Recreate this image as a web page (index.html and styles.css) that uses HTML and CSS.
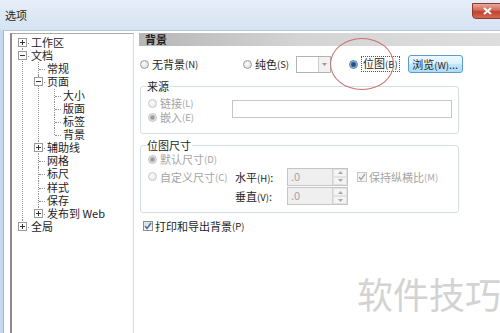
FILE: index.html
```html
<!DOCTYPE html>
<html lang="zh-CN">
<head>
    <meta charset="UTF-8">
    <title>选项</title>
    <link rel="stylesheet" href="styles.css">
</head>
<body>
<div class="window">
    <div class="titlebar">
        <span class="title">选项</span>
        <span class="close">
            <svg width="9" height="8" viewBox="0 0 9 8"><path d="M1 1l7 6M8 1l-7 6" stroke="#fff" stroke-width="2"/></svg>
        </span>
    </div>

    <div class="client">
        <!-- category tree -->
        <div class="tree">
            <ul>
                <li><svg class="exp" width="9" height="9"><rect x="0.5" y="0.5" width="8" height="8" fill="#fff" stroke="#9a9a9a"/><path d="M2 4.5h5M4.5 2v5" stroke="#333"/></svg><span class="label">工作区</span></li>
                <li><svg class="exp" width="9" height="9"><rect x="0.5" y="0.5" width="8" height="8" fill="#fff" stroke="#9a9a9a"/><path d="M2 4.5h5" stroke="#333"/></svg><span class="label">文档</span>
                    <ul>
                        <li><span class="label">常规</span></li>
                        <li><svg class="exp" width="9" height="9"><rect x="0.5" y="0.5" width="8" height="8" fill="#fff" stroke="#9a9a9a"/><path d="M2 4.5h5" stroke="#333"/></svg><span class="label">页面</span>
                            <ul>
                                <li><span class="label">大小</span></li>
                                <li><span class="label">版面</span></li>
                                <li><span class="label">标签</span></li>
                                <li><span class="label">背景</span></li>
                            </ul>
                        </li>
                        <li><svg class="exp" width="9" height="9"><rect x="0.5" y="0.5" width="8" height="8" fill="#fff" stroke="#9a9a9a"/><path d="M2 4.5h5M4.5 2v5" stroke="#333"/></svg><span class="label">辅助线</span></li>
                        <li><span class="label">网格</span></li>
                        <li><span class="label">标尺</span></li>
                        <li><span class="label">样式</span></li>
                        <li><span class="label">保存</span></li>
                        <li><svg class="exp" width="9" height="9"><rect x="0.5" y="0.5" width="8" height="8" fill="#fff" stroke="#9a9a9a"/><path d="M2 4.5h5M4.5 2v5" stroke="#333"/></svg><span class="label">发布到 Web</span></li>
                    </ul>
                </li>
                <li><svg class="exp" width="9" height="9"><rect x="0.5" y="0.5" width="8" height="8" fill="#fff" stroke="#9a9a9a"/><path d="M2 4.5h5M4.5 2v5" stroke="#333"/></svg><span class="label">全局</span></li>
            </ul>
        </div>

        <!-- background page -->
        <div class="panel">
            <div class="panel-head">背景</div>

            <div class="bg-row">
                <span class="opt opt-none"><span class="radio"></span>无背景<span class="key">(N)</span></span>
                <span class="opt opt-solid"><span class="radio"></span>纯色<span class="key">(S)</span></span>
                <span class="swatch">
                    <span class="swatch-color"></span>
                    <span class="swatch-drop"><svg width="5" height="3"><path d="M0 0h5L2.5 3z" fill="#999"/></svg></span>
                </span>
                <span class="opt opt-bitmap"><span class="radio radio-on"></span><span class="focus">位图<span class="key">(B)</span></span></span>
                <span class="btn">浏览<span class="key">(W)</span>...</span>
            </div>

            <fieldset class="group">
                <legend>来源</legend>
                <div class="source-body">
                    <div class="source-radios">
                        <div class="row disabled"><span class="radio radio-off"></span>链接<span class="key">(L)</span></div>
                        <div class="row disabled"><span class="radio radio-grey"></span>嵌入<span class="key">(E)</span></div>
                    </div>
                    <div class="text-input"></div>
                </div>
            </fieldset>

            <fieldset class="group group-size">
                <legend>位图尺寸</legend>
                <div class="size-grid">
                    <div class="row disabled"><span class="radio radio-grey"></span>默认尺寸<span class="key">(D)</span></div>
                    <div class="row disabled row-custom"><span class="radio radio-off"></span>自定义尺寸<span class="key">(C)</span></div>
                    <div class="field-label row-h">水平<span class="key">(H)</span>:</div>
                    <div class="spin row-h">
                        <span class="spin-val">.0</span>
                        <span class="spin-btns">
                            <span><svg width="5" height="3"><path d="M0 3h5L2.5 0z" fill="#aaa"/></svg></span>
                            <span><svg width="5" height="3"><path d="M0 0h5L2.5 3z" fill="#aaa"/></svg></span>
                        </span>
                    </div>
                    <div class="row disabled row-h keep">
                        <span class="check check-off"><svg width="8" height="8"><path d="M1 4l2 2.5L7 1" fill="none" stroke="#a8a8a8" stroke-width="1.4"/></svg></span>保持纵横比<span class="key">(M)</span>
                    </div>
                    <div class="field-label row-v">垂直<span class="key">(V)</span>:</div>
                    <div class="spin row-v">
                        <span class="spin-val">.0</span>
                        <span class="spin-btns">
                            <span><svg width="5" height="3"><path d="M0 3h5L2.5 0z" fill="#aaa"/></svg></span>
                            <span><svg width="5" height="3"><path d="M0 0h5L2.5 3z" fill="#aaa"/></svg></span>
                        </span>
                    </div>
                </div>
            </fieldset>

            <div class="check-row">
                <span class="check"><svg width="8" height="8"><path d="M1 4l2 2.5L7 1" fill="none" stroke="#3d6fa5" stroke-width="1.4"/></svg></span>打印和导出背景<span class="key">(P)</span>
            </div>

            <div class="callout"></div>
        </div>
    </div>

    <div class="watermark">软件技巧</div>
</div>
</body>
</html>
```

FILE: styles.css
```css
body {
    margin: 0;
    font-family: "Noto Sans CJK SC", "Noto Sans", sans-serif;
    font-size: 11px;
    color: #1e1e1e;
}
.window {
    position: relative;
    width: 500px;
    height: 333px;
    overflow: hidden;
    background: #c5d8ee;
}
.titlebar {
    display: flex;
    align-items: center;
    height: 30px;
    padding-left: 5px;
    background: linear-gradient(#e6eef8, #d5e3f3);
}
.close {
    display: flex;
    align-items: center;
    justify-content: center;
    align-self: flex-start;
    margin: 3px -3px 0 auto;
    width: 31px;
    height: 16px;
    box-sizing: border-box;
    border: 1px solid #8c3a30;
    border-radius: 0 0 0 4px;
    background: linear-gradient(#e9a99c, #d0685a 45%, #c04030 55%, #d56a52);
}
.client {
    display: flex;
    height: 303px;
    box-sizing: border-box;
    margin-left: 3px;
    padding: 2px 0 0 6px;
    border-left: 1px solid #a4b4c5;
    border-top: 1px solid #b8c7d7;
    background: #fff;
}

/* tree */
.tree {
    flex: none;
    width: 124px;
    height: 320px;
    box-sizing: border-box;
    border-left: 2px solid #8a8a8a;
    border-top: 1px solid #a9a9a9;
    border-right: 1px solid #dcdcdc;
}
.tree ul {
    list-style: none;
    margin: 0;
    padding: 0;
}
.tree > ul {
    margin-left: 10px;
    padding-top: 2px;
}
.tree li {
    position: relative;
    padding-left: 9px;
    white-space: nowrap;
}
.label {
    display: block;
    height: 13.15px;
    line-height: 13.15px;
}
.tree li::before {
    content: "";
    position: absolute;
    left: 0;
    top: 0;
    bottom: 0;
    border-left: 1px dotted #8e8e8e;
}
.tree > ul > li:first-child::before {
    top: 7px;
}
.tree li:last-child::before {
    bottom: auto;
    height: 7px;
}
.tree li::after {
    content: "";
    position: absolute;
    left: 1px;
    top: 7px;
    width: 6px;
    border-top: 1px dotted #8e8e8e;
}
.tree li ul {
    margin-left: 7px;
}
.exp {
    position: absolute;
    left: -4px;
    top: 2px;
    z-index: 1;
}

/* right panel */
.panel {
    position: relative;
    flex: 1;
    margin-left: 5px;
}
.panel-head {
    height: 13px;
    line-height: 13px;
    padding-left: 6px;
    font-weight: bold;
    background: linear-gradient(to right, #b6b6b6, #d4d4d4 45%, #dedede);
}
.key {
    font-size: 9.5px;
}
.bg-row {
    display: flex;
    align-items: center;
    height: 18px;
    margin-top: 9px;
}
.opt {
    display: flex;
    align-items: center;
    white-space: nowrap;
}
.opt-none {
    width: 103px;
    margin-left: 1px;
}
.opt-solid {
    width: 53px;
}
.opt-bitmap {
    margin-left: 18px;
}
.focus {
    display: inline-block;
    border: 1px dotted #555;
    padding: 0 1px;
    line-height: 13px;
    white-space: nowrap;
}
.radio {
    flex: none;
    width: 9px;
    height: 9px;
    box-sizing: border-box;
    margin-right: 3px;
    border: 1px solid #9c9c9c;
    border-radius: 50%;
    background: radial-gradient(circle at 40% 40%, #fdfdfd, #d4d4d4);
}
.radio-on {
    border-color: #5a7ea3;
    background: radial-gradient(circle, #1f4f7c 0 1.6px, #4b8ac0 2.6px, #c9ddef 3.6px);
}
.radio-off {
    border-color: #c8c8c8;
    background: radial-gradient(circle at 40% 40%, #fafafa, #e6e6e6);
}
.radio-grey {
    border-color: #c2c2c2;
    background: radial-gradient(circle, #9a9a9a 0 1.6px, #c8c8c8 2.4px, #eeeeee 3.4px);
}
.swatch {
    display: flex;
    height: 17px;
    box-sizing: border-box;
    border: 1px solid #b3b3b3;
}
.swatch-color {
    width: 21px;
    background: #fff;
    border-right: 1px solid #cdcdcd;
}
.swatch-drop {
    display: flex;
    align-items: center;
    justify-content: center;
    width: 11px;
    background: #f1f1f1;
}
.btn {
    width: 55px;
    height: 18px;
    box-sizing: border-box;
    margin-left: 8px;
    border: 1px solid #5d9bc8;
    border-radius: 3px;
    background: linear-gradient(#eef8fe, #dcf1fc 50%, #c3e6fa 50%, #b0dbf4);
    text-align: center;
    line-height: 16px;
    white-space: nowrap;
}

/* groups */
.group {
    width: 319px;
    min-width: 0;
    box-sizing: border-box;
    margin: 6px 0 0 1px;
    padding: 0 5px 9px 7px;
    border: 1px solid #d6dee4;
    border-radius: 3px;
}
.group legend {
    margin-left: -2px;
    padding: 0 1px;
    line-height: 14px;
}
.group-size {
    margin-top: 4px;
    padding-bottom: 7px;
}
.source-body {
    display: flex;
}
.source-radios {
    width: 84px;
    padding-top: 3px;
}
.row {
    display: flex;
    align-items: center;
    height: 14px;
    white-space: nowrap;
}
.disabled {
    color: #a4a4a4;
}
.text-input {
    width: 220px;
    height: 18px;
    box-sizing: border-box;
    margin-top: 7px;
    border: 1px solid #c6c6c6;
    background: #fff;
}
.size-grid {
    display: grid;
    grid-template-columns: 87px 52px 70px auto;
    grid-template-rows: 14px 21px 18px;
    align-items: center;
}
.row-custom {
    grid-row: 2;
    grid-column: 1;
}
.row-h {
    grid-row: 2;
}
.row-v {
    grid-row: 3;
}
.field-label {
    grid-column: 2;
    white-space: nowrap;
}
.spin {
    grid-column: 3;
    display: flex;
    width: 61px;
    height: 18px;
    box-sizing: border-box;
    border: 1px solid #c4c4c4;
    background: #efefef;
    color: #a4a4a4;
}
.spin-val {
    flex: 1;
    padding-left: 3px;
    line-height: 15px;
}
.spin-btns {
    display: flex;
    flex-direction: column;
    width: 14px;
    border-left: 1px solid #d2d2d2;
}
.spin-btns span {
    flex: 1;
    display: flex;
    align-items: center;
    justify-content: center;
    border: 1px solid #e2e2e2;
    background: #f4f4f4;
}
.keep {
    grid-column: 4;
}
.check {
    flex: none;
    display: flex;
    align-items: center;
    justify-content: center;
    width: 10px;
    height: 10px;
    box-sizing: border-box;
    margin-right: 2px;
    border: 1px solid #8f8f8f;
    background: linear-gradient(#dcdcdc, #fafafa);
}
.check-off {
    border-color: #c6c6c6;
    background: #f4f4f4;
}
.check-row {
    display: flex;
    align-items: center;
    height: 14px;
    margin: 6px 0 0 4px;
}
.callout {
    position: absolute;
    left: 191px;
    top: 5px;
    width: 64px;
    height: 52px;
    box-sizing: border-box;
    border: 1px solid #c87272;
    border-radius: 50%;
    pointer-events: none;
}
.watermark {
    position: absolute;
    left: 357px;
    top: 275px;
    font-size: 36px;
    line-height: 1;
    color: #d3d3d3;
    white-space: nowrap;
}
```
